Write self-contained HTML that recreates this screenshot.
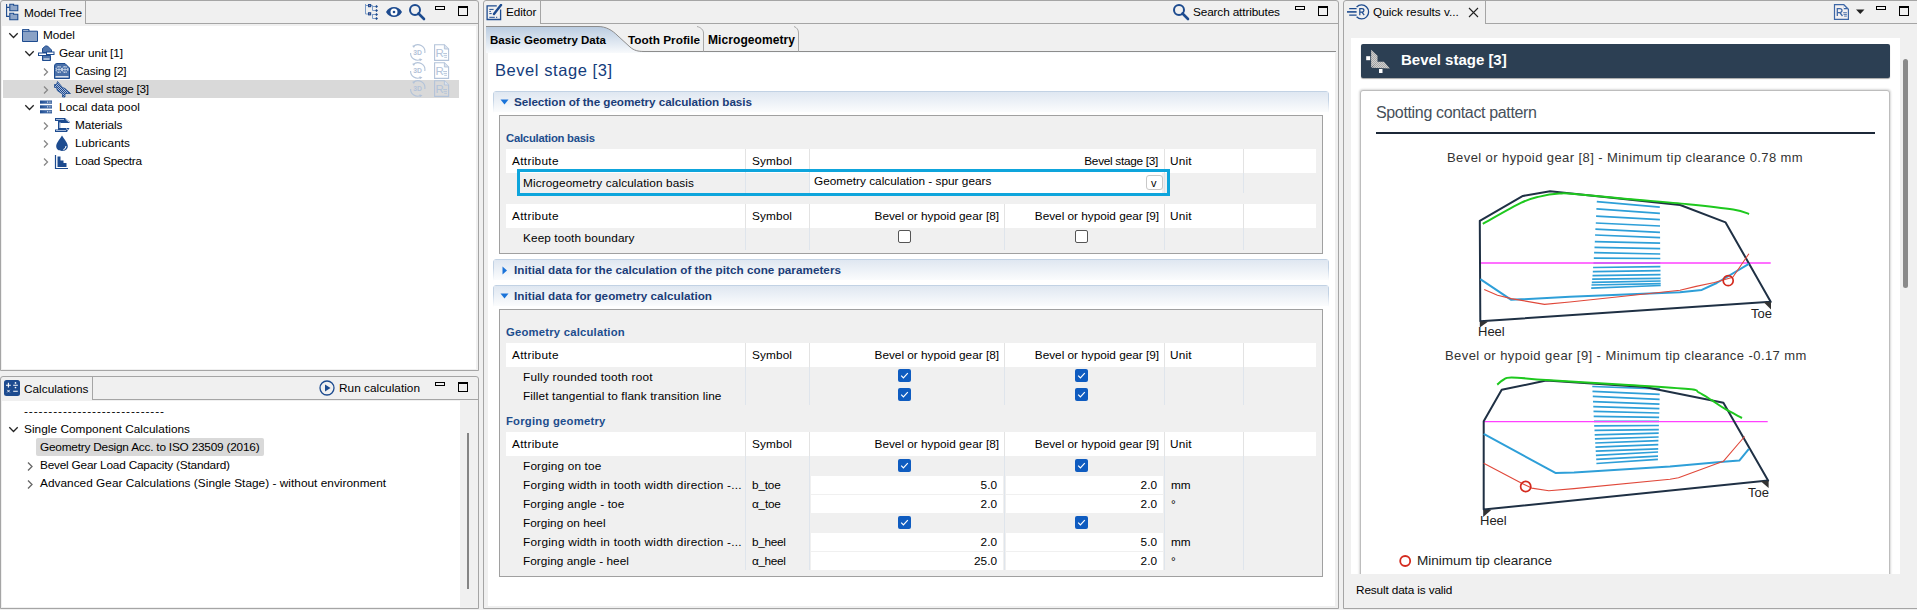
<!DOCTYPE html>
<html><head><meta charset="utf-8"><style>
*{box-sizing:border-box;margin:0;padding:0}
body{width:1917px;height:610px;overflow:hidden;background:#f0f0f0;font-family:"Liberation Sans",sans-serif;font-size:11.8px;color:#000;position:relative}
.a{position:absolute}
.t{position:absolute;white-space:nowrap;line-height:16px}
.pb{position:absolute;border:1px solid #a5a5a5;border-radius:3px 3px 0 0}
.hl{position:absolute;height:1px;background:#a5a5a5}
.vl{position:absolute;width:1px;background:#a5a5a5}
.white{position:absolute;background:#fff}
</style></head><body>

<!-- ============ MODEL TREE PANEL ============ -->
<div class="pb" style="left:0;top:0;width:479px;height:371px"></div>
<div class="hl" style="left:85px;top:23px;width:393px"></div>
<div class="vl" style="left:85px;top:1px;height:23px"></div>
<div class="white" style="left:2px;top:26px;width:474px;height:343px"></div>


<!-- Model tree header -->
<svg class="a" style="left:4px;top:3px" width="18" height="18" viewBox="0 0 18 18"><path d="M2.6 1V13.4H5.5M2.6 4.4H5.5" stroke="#1d4b8f" stroke-width="1.1" fill="none"></path><path d="M5.8 1.3H9.6V2.3H13.8V7.7H5.8Z" fill="#8fa6c8" stroke="#1d4b8f" stroke-width="1.1"></path><path d="M5.8 10.3H9.6V11.3H13.8V16.7H5.8Z" fill="#8fa6c8" stroke="#1d4b8f" stroke-width="1.1"></path></svg>
<div class="t" style="left: 24px; top: 5px; letter-spacing: -0.113px;">Model Tree</div>
<svg class="a" style="left:364px;top:3px" width="16" height="18" viewBox="0 0 16 18">
 <path d="M1.5 1V11M1.5 2.5H4.5M1.5 11H4.5M7 2.5H8.5V7.5H11M8.5 3.5H11M8.5 11H8.5V15.5H11M8.5 11.5H11" stroke="#7d9cc6" stroke-width="1" fill="none"></path>
 <rect x="4" y="1" width="3.2" height="3.2" fill="#1d4b8f"></rect><rect x="4" y="9.2" width="3.2" height="3.2" fill="#1d4b8f"></rect>
 <rect x="5.2" y="2.2" width="0.9" height="0.9" fill="#f0a0b0"></rect><rect x="5.2" y="10.4" width="0.9" height="0.9" fill="#f0a0b0"></rect>
 <path d="M12.5 2L14 3.5L12.5 5L11 3.5Z M12.5 6L14 7.5L12.5 9L11 7.5Z M12.5 10L14 11.5L12.5 13L11 11.5Z M12.5 14L14 15.5L12.5 17L11 15.5Z" fill="#1d4b8f"></path>
</svg>
<svg class="a" style="left:386px;top:6px" width="16" height="12" viewBox="0 0 16 12">
 <path d="M0 6C3.5 -0.8 12.5 -0.8 16 6C12.5 12.8 3.5 12.8 0 6Z" fill="#1d4b8f"></path>
 <circle cx="8" cy="6" r="3.5" fill="#fff"></circle><circle cx="8" cy="6" r="1.3" fill="#1d4b8f"></circle>
</svg>
<svg class="a" style="left:408px;top:3px" width="18" height="18" viewBox="0 0 18 18">
 <circle cx="7" cy="7" r="5" stroke="#1d4b8f" stroke-width="2" fill="none"></circle>
 <path d="M10.5 10.5L16 16" stroke="#1d4b8f" stroke-width="2.6" stroke-linecap="round"></path>
</svg>
<div class="a" style="left:435px;top:6px;width:10px;height:4px;border:1px solid #000"></div>
<div class="a" style="left:458px;top:6px;width:10px;height:10px;border:1px solid #000;border-top-width:2px"></div>

<!-- Model tree rows -->
<div class="a" style="left:3px;top:80px;width:456px;height:18px;background:#d9d9d9"></div>
<svg class="a" style="left:8px;top:31px" width="11" height="9" viewBox="0 0 11 9"><path d="M1.3 2.3L5.5 6.5L9.7 2.3" stroke="#222" stroke-width="1.3" fill="none"></path></svg>
<svg class="a" style="left:24px;top:49px" width="11" height="9" viewBox="0 0 11 9"><path d="M1.3 2.3L5.5 6.5L9.7 2.3" stroke="#222" stroke-width="1.3" fill="none"></path></svg>
<svg class="a" style="left:24px;top:103px" width="11" height="9" viewBox="0 0 11 9"><path d="M1.3 2.3L5.5 6.5L9.7 2.3" stroke="#222" stroke-width="1.3" fill="none"></path></svg>
<svg class="a" style="left:42px;top:67px" width="8" height="10" viewBox="0 0 8 10"><path d="M2 1.5L5.5 5L2 8.5" stroke="#888" stroke-width="1.3" fill="none"></path></svg>
<svg class="a" style="left:42px;top:85px" width="8" height="10" viewBox="0 0 8 10"><path d="M2 1.5L5.5 5L2 8.5" stroke="#888" stroke-width="1.3" fill="none"></path></svg>
<svg class="a" style="left:42px;top:121px" width="8" height="10" viewBox="0 0 8 10"><path d="M2 1.5L5.5 5L2 8.5" stroke="#888" stroke-width="1.3" fill="none"></path></svg>
<svg class="a" style="left:42px;top:139px" width="8" height="10" viewBox="0 0 8 10"><path d="M2 1.5L5.5 5L2 8.5" stroke="#888" stroke-width="1.3" fill="none"></path></svg>
<svg class="a" style="left:42px;top:157px" width="8" height="10" viewBox="0 0 8 10"><path d="M2 1.5L5.5 5L2 8.5" stroke="#888" stroke-width="1.3" fill="none"></path></svg>

<svg class="a" style="left:22px;top:29px" width="17" height="14" viewBox="0 0 17 14"><path d="M0.5 0.5H7V2.2H15.5V12.5H0.5Z" fill="#8aa2c6" stroke="#1d4b8f" stroke-width="1"></path><path d="M0.5 2.2H7" stroke="#1d4b8f"></path><path d="M1.2 1.3H6.3" stroke="#b8c7dc" stroke-width="0.8"></path></svg>
<svg class="a" style="left:38px;top:45px" width="17" height="17" viewBox="0 0 17 17"><path d="M4.5 7.5V3.5L7.5 1H9.5L13.5 5V7.5Z" fill="#4f74aa" stroke="#1d4b8f"></path><path d="M4.5 10.5H12.5V15.5H4.5Z" fill="#4f74aa" stroke="#1d4b8f"></path><path d="M5.5 14H11.5" stroke="#fff"></path><rect x="0.5" y="8" width="8" height="2.5" fill="#fff" stroke="#1d4b8f"></rect><rect x="8.5" y="7" width="7.5" height="2.5" fill="#fff" stroke="#1d4b8f"></rect></svg>
<svg class="a" style="left:54px;top:63px" width="17" height="17" viewBox="0 0 17 17"><path d="M0.5 3Q0.5 0.5 3 0.5H11L15.5 5V15.5H0.5Z" fill="#4a70a8" stroke="#1d4b8f"></path><circle cx="5" cy="6.5" r="3" fill="none" stroke="#fff" stroke-width="0.9" stroke-dasharray="1.4 1"></circle><circle cx="11" cy="6.5" r="3" fill="none" stroke="#fff" stroke-width="0.9" stroke-dasharray="1.4 1"></circle><path d="M5 3.5V9.5M2 6.5H14M11 3.5V9.5" stroke="#e8eef6" stroke-width="0.6"></path><path d="M1.5 13.8H14.5" stroke="#fff" stroke-width="1.2"></path></svg>
<svg class="a" style="left:54px;top:81px" width="17" height="17" viewBox="0 0 17 17"><defs><pattern id="chk" width="2" height="2" patternUnits="userSpaceOnUse"><rect width="2" height="2" fill="#1d4b8f"></rect><rect width="1" height="1" fill="#a9badb"></rect><rect x="1" y="1" width="1" height="1" fill="#a9badb"></rect></pattern></defs><path d="M3.5 0.5L8.5 6.5L11 7.5L16.5 12.5H11V16H8.5V13L3.4 9.7L2.5 6.5H0.5V3.5H2.5Z" fill="url(#chk)"></path><path d="M3.5 0.5L8.5 6.5L11 7.5L16.5 12.5H11V16H8.5V13L3.4 9.7L2.5 6.5H0.5V3.5H2.5Z" fill="none" stroke="#1d4b8f" stroke-width="0.8"></path></svg>
<svg class="a" style="left:39px;top:99px" width="15" height="16" viewBox="0 0 15 16"><defs><linearGradient id="dp" x1="0" x2="1"><stop offset="0" stop-color="#1d4b8f"></stop><stop offset="0.5" stop-color="#3d68a8"></stop><stop offset="1" stop-color="#1d4b8f"></stop></linearGradient></defs><rect x="1" y="1.5" width="12" height="3.2" fill="url(#dp)"></rect><rect x="1" y="6.3" width="12" height="3.2" fill="url(#dp)"></rect><rect x="1" y="11.2" width="12" height="3.2" fill="url(#dp)"></rect><path d="M8 3.1h1M9.7 3.1h1M11.4 3.1h1M8 7.9h1M9.7 7.9h1M11.4 7.9h1M8 12.8h1M9.7 12.8h1M11.4 12.8h1" stroke="#fff" stroke-width="1"></path></svg>
<svg class="a" style="left:54px;top:117px" width="17" height="17" viewBox="0 0 17 17"><path d="M1 1H11L15.5 4.5V6H5.5V11H15.5L13 15H1V12.5H4V4H1Z" fill="#1d4b8f"></path><path d="M2 2.5H10M6 5V11M2 13.5H12" stroke="#9fb5d6" stroke-width="1"></path><path d="M11.5 2L15 5M12 11.5L15 14" stroke="#fff" stroke-width="0.8"></path></svg>
<svg class="a" style="left:55px;top:135px" width="14" height="17" viewBox="0 0 14 17"><path d="M7 0.5C9.5 4.5 12.8 8 12.8 11.3C12.8 14.3 10.3 16 7 16C3.7 16 1.2 14.3 1.2 11.3C1.2 8 4.5 4.5 7 0.5Z" fill="#1d4b8f"></path><path d="M11 11C11 13 10 14 8.5 14.8" stroke="#fff" stroke-width="1.1" fill="none"></path></svg>
<svg class="a" style="left:54px;top:154px" width="16" height="16" viewBox="0 0 16 16"><path d="M1.5 1V14.5H14" stroke="#1d4b8f" stroke-width="1.2" fill="none"></path><path d="M3.5 2.5H6.5V6.5H9.5V9H12.5V13H3.5Z" fill="#1d4b8f"></path></svg>

<div class="t" style="left: 43px; top: 27px; letter-spacing: -0.035px;">Model</div>
<div class="t" style="left: 59px; top: 45px; letter-spacing: -0.077px;">Gear unit [1]</div>
<div class="t" style="left: 75px; top: 63px; letter-spacing: -0.169px;">Casing [2]</div>
<div class="t" style="left: 75px; top: 81px; letter-spacing: -0.289px;">Bevel stage [3]</div>
<div class="t" style="left: 59px; top: 99px; letter-spacing: 0.069px;">Local data pool</div>
<div class="t" style="left: 75px; top: 117px; letter-spacing: -0.045px;">Materials</div>
<div class="t" style="left: 75px; top: 135px; letter-spacing: 0.063px;">Lubricants</div>
<div class="t" style="left: 75px; top: 153px; letter-spacing: -0.29px;">Load Spectra</div>
<svg class="a" style="left:409px;top:44px" width="18" height="18" viewBox="0 0 18 18"><g stroke="#b3c3d9" fill="none" stroke-width="1.1"><path d="M4 2.8A7 7 0 0 1 15.8 9"></path><path d="M1.6 9A7 7 0 0 0 11.5 15.6"></path></g><path d="M3.2 1.8L6 1.2L5 4Z M10.5 14.3L13.5 15.6L10.8 17.2Z" fill="#b3c3d9"></path><text x="4.3" y="11.3" font-family="Liberation Sans" font-weight="bold" font-size="6.8" fill="#b3c3d9">3D</text></svg>
<svg class="a" style="left:434px;top:44px" width="16" height="18" viewBox="0 0 16 18"><path d="M0.6 0.8H10.4L14.6 5V16.4H0.6Z" fill="none" stroke="#b3c3d9" stroke-width="1.1"></path><path d="M10.4 0.8V5H14.6" fill="#dbe3ee" stroke="#b3c3d9" stroke-width="0.9"></path><text x="1.6" y="13.2" font-family="Liberation Sans" font-size="11.5" fill="#b3c3d9">R</text><path d="M9.2 9.5H13M9.6 11.4H13M10.2 13.3H13" stroke="#b3c3d9" stroke-width="0.9"></path></svg>
<svg class="a" style="left:409px;top:62px" width="18" height="18" viewBox="0 0 18 18"><g stroke="#b3c3d9" fill="none" stroke-width="1.1"><path d="M4 2.8A7 7 0 0 1 15.8 9"></path><path d="M1.6 9A7 7 0 0 0 11.5 15.6"></path></g><path d="M3.2 1.8L6 1.2L5 4Z M10.5 14.3L13.5 15.6L10.8 17.2Z" fill="#b3c3d9"></path><text x="4.3" y="11.3" font-family="Liberation Sans" font-weight="bold" font-size="6.8" fill="#b3c3d9">3D</text></svg>
<svg class="a" style="left:434px;top:62px" width="16" height="18" viewBox="0 0 16 18"><path d="M0.6 0.8H10.4L14.6 5V16.4H0.6Z" fill="none" stroke="#b3c3d9" stroke-width="1.1"></path><path d="M10.4 0.8V5H14.6" fill="#dbe3ee" stroke="#b3c3d9" stroke-width="0.9"></path><text x="1.6" y="13.2" font-family="Liberation Sans" font-size="11.5" fill="#b3c3d9">R</text><path d="M9.2 9.5H13M9.6 11.4H13M10.2 13.3H13" stroke="#b3c3d9" stroke-width="0.9"></path></svg>
<svg class="a" style="left:409px;top:80px" width="18" height="18" viewBox="0 0 18 18"><g stroke="#b3c3d9" fill="none" stroke-width="1.1"><path d="M4 2.8A7 7 0 0 1 15.8 9"></path><path d="M1.6 9A7 7 0 0 0 11.5 15.6"></path></g><path d="M3.2 1.8L6 1.2L5 4Z M10.5 14.3L13.5 15.6L10.8 17.2Z" fill="#b3c3d9"></path><text x="4.3" y="11.3" font-family="Liberation Sans" font-weight="bold" font-size="6.8" fill="#b3c3d9">3D</text></svg>
<svg class="a" style="left:434px;top:80px" width="16" height="18" viewBox="0 0 16 18"><path d="M0.6 0.8H10.4L14.6 5V16.4H0.6Z" fill="none" stroke="#b3c3d9" stroke-width="1.1"></path><path d="M10.4 0.8V5H14.6" fill="#dbe3ee" stroke="#b3c3d9" stroke-width="0.9"></path><text x="1.6" y="13.2" font-family="Liberation Sans" font-size="11.5" fill="#b3c3d9">R</text><path d="M9.2 9.5H13M9.6 11.4H13M10.2 13.3H13" stroke="#b3c3d9" stroke-width="0.9"></path></svg>

<!-- ============ CALCULATIONS PANEL ============ -->
<div class="pb" style="left:0;top:376px;width:479px;height:233px"></div>
<div class="hl" style="left:92px;top:399px;width:386px"></div>
<div class="vl" style="left:92px;top:377px;height:23px"></div>
<div class="white" style="left:2px;top:401px;width:458px;height:206px"></div>


<!-- Calculations header -->
<svg class="a" style="left:4px;top:380px" width="16" height="16" viewBox="0 0 16 16"><rect x="0" y="0" width="16" height="16" rx="2.5" fill="#1d4b8f"></rect><path d="M2 5.2H6.8M4.4 2.8V7.6M9.2 5.2H13.8M9.2 11.2H13.8" stroke="#fff" stroke-width="1.1"></path><path d="M3.3 9.9L5.7 12.3M5.7 9.9L3.3 12.3" stroke="#fff" stroke-width="0.9"></path><circle cx="11.5" cy="2.9" r="0.85" fill="#fff"></circle><circle cx="11.5" cy="7.5" r="0.85" fill="#fff"></circle></svg>
<div class="t" style="left: 24px; top: 381px; letter-spacing: 0.012px;">Calculations</div>
<svg class="a" style="left:319px;top:380px" width="16" height="16" viewBox="0 0 16 16"><circle cx="8" cy="8" r="7" fill="none" stroke="#1d4b8f" stroke-width="1.3"></circle><path d="M6 4.5L11.5 8L6 11.5Z" fill="#1d4b8f"></path></svg>
<div class="t" style="left: 339px; top: 380px; letter-spacing: 0.023px;">Run calculation</div>
<div class="a" style="left:435px;top:382px;width:10px;height:4px;border:1px solid #000"></div>
<div class="a" style="left:458px;top:382px;width:10px;height:10px;border:1px solid #000;border-top-width:2px"></div>
<div class="a" style="left:467px;top:433px;width:2px;height:156px;background:#858585"></div>

<div class="a" style="left:36px;top:438px;width:228px;height:18px;background:#d9d9d9;border-radius:2px"></div>
<svg class="a" style="left:8px;top:425px" width="11" height="9" viewBox="0 0 11 9"><path d="M1.3 2.3L5.5 6.5L9.7 2.3" stroke="#222" stroke-width="1.3" fill="none"></path></svg>
<svg class="a" style="left:26px;top:461px" width="8" height="11" viewBox="0 0 8 11"><path d="M2 1.5L6 5.5L2 9.5" stroke="#666" stroke-width="1.3" fill="none"></path></svg>
<svg class="a" style="left:26px;top:479px" width="8" height="11" viewBox="0 0 8 11"><path d="M2 1.5L6 5.5L2 9.5" stroke="#666" stroke-width="1.3" fill="none"></path></svg>
<div class="t" style="left: 24px; top: 403px; letter-spacing: 0.931px;">-----------------------------</div>
<div class="t" style="left: 24px; top: 421px; letter-spacing: 0.05px;">Single Component Calculations</div>
<div class="t" style="left: 40px; top: 439px; letter-spacing: -0.204px;">Geometry Design Acc. to ISO 23509 (2016)</div>
<div class="t" style="left: 40px; top: 457px; letter-spacing: -0.198px;">Bevel Gear Load Capacity (Standard)</div>
<div class="t" style="left: 40px; top: 475px; letter-spacing: 0.039px;">Advanced Gear Calculations (Single Stage) - without environment</div>

<!-- ============ EDITOR PANEL ============ -->
<div class="pb" style="left:483px;top:0;width:856px;height:609px"></div>
<div class="hl" style="left:540px;top:23px;width:798px"></div>
<div class="vl" style="left:540px;top:1px;height:23px"></div>

<div class="white" style="left:488px;top:53px;width:847px;height:553px"></div>

<!-- EDITOR CONTENT -->
<svg class="a" style="left:486px;top:4px" width="17" height="17" viewBox="0 0 17 17"><path d="M10.8 1.9H1.1V15.5H14.6V5.6" stroke="#1d4b8f" stroke-width="1.3" fill="none"></path><path d="M3.3 5.4H7.6M3.3 7.4H4.9M3.3 9.6H5.7M3.3 13.3H8.8M10 13.3H11.2" stroke="#1d4b8f" stroke-width="1"></path><path d="M15 1L8 10" stroke="#1d4b8f" stroke-width="2.4" stroke-linecap="round"></path></svg>
<div class="t" style="left: 506px; top: 4px; letter-spacing: -0.066px;">Editor</div>
<svg class="a" style="left:1172px;top:3px" width="18" height="18" viewBox="0 0 18 18"><circle cx="7" cy="7" r="5" stroke="#1d4b8f" stroke-width="2" fill="none"></circle><path d="M10.5 10.5L16 16" stroke="#1d4b8f" stroke-width="2.6" stroke-linecap="round"></path></svg>
<div class="t" style="left: 1193px; top: 4px; letter-spacing: -0.137px;">Search attributes</div>
<div class="a" style="left:1295px;top:6px;width:10px;height:4px;border:1px solid #000"></div>
<div class="a" style="left:1318px;top:6px;width:10px;height:10px;border:1px solid #000;border-top-width:2px"></div>
<svg class="a" style="left:486px;top:26px" width="850" height="27" viewBox="0 0 850 27">
<defs><linearGradient id="tg" x1="0" y1="0" x2="0" y2="1"><stop offset="0" stop-color="#b9cbe0"></stop><stop offset="1" stop-color="#f8fafc"></stop></linearGradient></defs>
<path d="M0 0.5H112C120 0.5 126 4 132 10L144 21C148 24.5 152 25.5 158 25.5H850V27H0Z" fill="url(#tg)"></path>
<path d="M0 0.5H112C120 0.5 126 4 132 10L144 21C148 24.5 152 25.5 158 25.5H850" fill="none" stroke="#8c8c8c" stroke-width="1"></path>
<path d="M211 0.5C215 1.5 217.5 4 217.5 7V25.5M308 0.5C311 1.5 312.5 4 312.5 7V25.5" fill="none" stroke="#a8a8a8" stroke-width="1"></path>
</svg>
<div class="t" style="left: 490px; top: 32px; font-weight: bold; font-size: 11.5px; letter-spacing: 0.016px;">Basic Geometry Data</div>
<div class="t" style="left: 628px; top: 32px; font-weight: bold; font-size: 11.8px; letter-spacing: 0.01px;">Tooth Profile</div>
<div class="t" style="left: 708px; top: 32px; font-weight: bold; font-size: 12px; letter-spacing: 0.081px;">Microgeometry</div>
<div class="t" style="left: 495px; top: 60px; font-size: 16.5px; line-height: 20px; color: rgb(20, 60, 124); letter-spacing: 0.56px;">Bevel stage [3]</div>
<div class="a" style="left:493px;top:91px;width:836px;height:22px;border:1px solid #c2d2e4;border-bottom:none;border-radius:3px 3px 0 0;background:linear-gradient(#dde6f0,#fff);-webkit-mask-image:linear-gradient(#000 40%,transparent)"></div>
<div class="a" style="left:494px;top:92px;width:834px;height:20px;background:linear-gradient(#dfe7f1,#fbfcfd)"></div>
<svg class="a" style="left:500px;top:99px" width="9" height="6" viewBox="0 0 9 6"><path d="M0.5 0.5H8.5L4.5 5.5Z" fill="#1a73d9"></path></svg>
<div class="t" style="left: 514px; top: 94px; font-weight: bold; font-size: 11.7px; color: rgb(27, 61, 120); letter-spacing: -0.055px;">Selection of the geometry calculation basis</div>
<div class="a" style="left:499px;top:115px;width:824px;height:139px;border:1px solid #a0a0a0;background:#f0f0f0"></div>
<div class="t" style="left: 506px; top: 130px; font-weight: bold; font-size: 11.3px; color: rgb(29, 77, 141); letter-spacing: -0.245px;">Calculation basis</div>
<div class="a" style="left:506px;top:149px;width:810px;height:24px;background:#fff"></div>
<div class="a" style="left:745px;top:149px;width:1px;height:24px;background:#e3e3e3"></div>
<div class="a" style="left:809px;top:149px;width:1px;height:24px;background:#e3e3e3"></div>
<div class="a" style="left:1164px;top:149px;width:1px;height:24px;background:#e3e3e3"></div>
<div class="a" style="left:1243px;top:149px;width:1px;height:24px;background:#e3e3e3"></div>
<div class="t" style="left: 512px; top: 153px; letter-spacing: 0.32px;">Attribute</div>
<div class="t" style="left: 752px; top: 153px; letter-spacing: 0.131px;">Symbol</div>
<div class="t" style="left: 858px; width: 300px; text-align: right; top: 153px; letter-spacing: -0.289px;">Bevel stage [3]</div>
<div class="t" style="left: 1170px; top: 153px; letter-spacing: 0.205px;">Unit</div>
<div class="a" style="left:745px;top:173px;width:1px;height:20px;background:#dfe5ec"></div>
<div class="a" style="left:809px;top:173px;width:1px;height:20px;background:#dfe5ec"></div>
<div class="a" style="left:1164px;top:173px;width:1px;height:20px;background:#dfe5ec"></div>
<div class="a" style="left:1243px;top:173px;width:1px;height:20px;background:#dfe5ec"></div>
<div class="t" style="left: 523px; top: 175px; letter-spacing: 0.105px;">Microgeometry calculation basis</div>
<div class="a" style="left:810px;top:172px;width:352px;height:21px;background:#fff"></div>
<div class="t" style="left: 814px; top: 173px; letter-spacing: 0.012px;">Geometry calculation - spur gears</div>
<div class="a" style="left:1146px;top:175px;width:17px;height:15px;border:1px solid #c8c8c8;border-radius:3px;background:#fff"></div>
<div class="t" style="left:1151px;top:175px;font-size:11px">v</div>
<div class="a" style="left:517px;top:169px;width:653px;height:27px;border:3px solid #0ea5dc"></div>
<div class="a" style="left:506px;top:204px;width:810px;height:24px;background:#fff"></div>
<div class="a" style="left:745px;top:204px;width:1px;height:24px;background:#e3e3e3"></div>
<div class="a" style="left:809px;top:204px;width:1px;height:24px;background:#e3e3e3"></div>
<div class="a" style="left:1004px;top:204px;width:1px;height:24px;background:#e3e3e3"></div>
<div class="a" style="left:1164px;top:204px;width:1px;height:24px;background:#e3e3e3"></div>
<div class="a" style="left:1243px;top:204px;width:1px;height:24px;background:#e3e3e3"></div>
<div class="t" style="left: 512px; top: 208px; letter-spacing: 0.32px;">Attribute</div>
<div class="t" style="left: 752px; top: 208px; letter-spacing: 0.131px;">Symbol</div>
<div class="t" style="left: 699px; width: 300px; text-align: right; top: 208px; letter-spacing: -0.005px;">Bevel or hypoid gear [8]</div>
<div class="t" style="left: 859px; width: 300px; text-align: right; top: 208px; letter-spacing: -0.018px;">Bevel or hypoid gear [9]</div>
<div class="t" style="left: 1170px; top: 208px; letter-spacing: 0.205px;">Unit</div>
<div class="a" style="left:745px;top:228px;width:1px;height:22px;background:#dfe5ec"></div>
<div class="a" style="left:809px;top:228px;width:1px;height:22px;background:#dfe5ec"></div>
<div class="a" style="left:1004px;top:228px;width:1px;height:22px;background:#dfe5ec"></div>
<div class="a" style="left:1164px;top:228px;width:1px;height:22px;background:#dfe5ec"></div>
<div class="a" style="left:1243px;top:228px;width:1px;height:22px;background:#dfe5ec"></div>
<div class="t" style="left: 523px; top: 230px; letter-spacing: 0.109px;">Keep tooth boundary</div>
<div class="a" style="left:898px;top:230px;width:13px;height:13px;border:1px solid #555;border-radius:2px;background:#fff"></div>
<div class="a" style="left:1075px;top:230px;width:13px;height:13px;border:1px solid #555;border-radius:2px;background:#fff"></div>
<div class="a" style="left:493px;top:259px;width:836px;height:22px;border:1px solid #c2d2e4;border-bottom:none;border-radius:3px 3px 0 0;background:linear-gradient(#dde6f0,#fff);-webkit-mask-image:linear-gradient(#000 40%,transparent)"></div>
<div class="a" style="left:494px;top:260px;width:834px;height:20px;background:linear-gradient(#dfe7f1,#fbfcfd)"></div>
<svg class="a" style="left:502px;top:266px" width="6" height="9" viewBox="0 0 6 9"><path d="M0.5 0.5V8.5L5 4.5Z" fill="#1a73d9"></path></svg>
<div class="t" style="left: 514px; top: 262px; font-weight: bold; font-size: 11.7px; color: rgb(27, 61, 120); letter-spacing: 0.038px;">Initial data for the calculation of the pitch cone parameters</div>
<div class="a" style="left:493px;top:285px;width:836px;height:22px;border:1px solid #c2d2e4;border-bottom:none;border-radius:3px 3px 0 0;background:linear-gradient(#dde6f0,#fff);-webkit-mask-image:linear-gradient(#000 40%,transparent)"></div>
<div class="a" style="left:494px;top:286px;width:834px;height:20px;background:linear-gradient(#dfe7f1,#fbfcfd)"></div>
<svg class="a" style="left:500px;top:293px" width="9" height="6" viewBox="0 0 9 6"><path d="M0.5 0.5H8.5L4.5 5.5Z" fill="#1a73d9"></path></svg>
<div class="t" style="left: 514px; top: 288px; font-weight: bold; font-size: 11.7px; color: rgb(27, 61, 120); letter-spacing: 0.033px;">Initial data for geometry calculation</div>
<div class="a" style="left:499px;top:309px;width:824px;height:268px;border:1px solid #a0a0a0;background:#f0f0f0"></div>
<div class="t" style="left: 506px; top: 324px; font-weight: bold; font-size: 11.3px; color: rgb(29, 77, 141); letter-spacing: 0.2px;">Geometry calculation</div>
<div class="a" style="left:506px;top:343px;width:810px;height:24px;background:#fff"></div>
<div class="a" style="left:745px;top:343px;width:1px;height:24px;background:#e3e3e3"></div>
<div class="a" style="left:809px;top:343px;width:1px;height:24px;background:#e3e3e3"></div>
<div class="a" style="left:1004px;top:343px;width:1px;height:24px;background:#e3e3e3"></div>
<div class="a" style="left:1164px;top:343px;width:1px;height:24px;background:#e3e3e3"></div>
<div class="a" style="left:1243px;top:343px;width:1px;height:24px;background:#e3e3e3"></div>
<div class="t" style="left: 512px; top: 347px; letter-spacing: 0.32px;">Attribute</div>
<div class="t" style="left: 752px; top: 347px; letter-spacing: 0.131px;">Symbol</div>
<div class="t" style="left: 699px; width: 300px; text-align: right; top: 347px; letter-spacing: -0.005px;">Bevel or hypoid gear [8]</div>
<div class="t" style="left: 859px; width: 300px; text-align: right; top: 347px; letter-spacing: -0.018px;">Bevel or hypoid gear [9]</div>
<div class="t" style="left: 1170px; top: 347px; letter-spacing: 0.205px;">Unit</div>
<div class="a" style="left:745px;top:367px;width:1px;height:38px;background:#dfe5ec"></div>
<div class="a" style="left:809px;top:367px;width:1px;height:38px;background:#dfe5ec"></div>
<div class="a" style="left:1004px;top:367px;width:1px;height:38px;background:#dfe5ec"></div>
<div class="a" style="left:1164px;top:367px;width:1px;height:38px;background:#dfe5ec"></div>
<div class="a" style="left:1243px;top:367px;width:1px;height:38px;background:#dfe5ec"></div>
<div class="t" style="left: 523px; top: 369px; letter-spacing: 0.217px;">Fully rounded tooth root</div>
<div class="t" style="left: 523px; top: 388px; letter-spacing: 0.121px;">Fillet tangential to flank transition line</div>
<svg class="a" style="left:898px;top:369px" width="13" height="13" viewBox="0 0 13 13"><rect width="13" height="13" rx="2" fill="#0f5cc0"></rect><path d="M3.2 6.6L5.4 8.8L9.8 4.2" stroke="#fff" stroke-width="1.2" fill="none"></path></svg>
<svg class="a" style="left:1075px;top:369px" width="13" height="13" viewBox="0 0 13 13"><rect width="13" height="13" rx="2" fill="#0f5cc0"></rect><path d="M3.2 6.6L5.4 8.8L9.8 4.2" stroke="#fff" stroke-width="1.2" fill="none"></path></svg>
<svg class="a" style="left:898px;top:388px" width="13" height="13" viewBox="0 0 13 13"><rect width="13" height="13" rx="2" fill="#0f5cc0"></rect><path d="M3.2 6.6L5.4 8.8L9.8 4.2" stroke="#fff" stroke-width="1.2" fill="none"></path></svg>
<svg class="a" style="left:1075px;top:388px" width="13" height="13" viewBox="0 0 13 13"><rect width="13" height="13" rx="2" fill="#0f5cc0"></rect><path d="M3.2 6.6L5.4 8.8L9.8 4.2" stroke="#fff" stroke-width="1.2" fill="none"></path></svg>
<div class="t" style="left: 506px; top: 413px; font-weight: bold; font-size: 11.3px; color: rgb(29, 77, 141); letter-spacing: 0.218px;">Forging geometry</div>
<div class="a" style="left:506px;top:432px;width:810px;height:24px;background:#fff"></div>
<div class="a" style="left:745px;top:432px;width:1px;height:24px;background:#e3e3e3"></div>
<div class="a" style="left:809px;top:432px;width:1px;height:24px;background:#e3e3e3"></div>
<div class="a" style="left:1004px;top:432px;width:1px;height:24px;background:#e3e3e3"></div>
<div class="a" style="left:1164px;top:432px;width:1px;height:24px;background:#e3e3e3"></div>
<div class="a" style="left:1243px;top:432px;width:1px;height:24px;background:#e3e3e3"></div>
<div class="t" style="left: 512px; top: 436px; letter-spacing: 0.32px;">Attribute</div>
<div class="t" style="left: 752px; top: 436px; letter-spacing: 0.131px;">Symbol</div>
<div class="t" style="left: 699px; width: 300px; text-align: right; top: 436px; letter-spacing: -0.005px;">Bevel or hypoid gear [8]</div>
<div class="t" style="left: 859px; width: 300px; text-align: right; top: 436px; letter-spacing: -0.018px;">Bevel or hypoid gear [9]</div>
<div class="t" style="left: 1170px; top: 436px; letter-spacing: 0.205px;">Unit</div>
<div class="a" style="left:745px;top:456px;width:1px;height:114px;background:#dfe5ec"></div>
<div class="a" style="left:809px;top:456px;width:1px;height:114px;background:#dfe5ec"></div>
<div class="a" style="left:1004px;top:456px;width:1px;height:114px;background:#dfe5ec"></div>
<div class="a" style="left:1164px;top:456px;width:1px;height:114px;background:#dfe5ec"></div>
<div class="a" style="left:1243px;top:456px;width:1px;height:114px;background:#dfe5ec"></div>
<svg class="a" style="left:898px;top:459px" width="13" height="13" viewBox="0 0 13 13"><rect width="13" height="13" rx="2" fill="#0f5cc0"></rect><path d="M3.2 6.6L5.4 8.8L9.8 4.2" stroke="#fff" stroke-width="1.2" fill="none"></path></svg>
<svg class="a" style="left:1075px;top:459px" width="13" height="13" viewBox="0 0 13 13"><rect width="13" height="13" rx="2" fill="#0f5cc0"></rect><path d="M3.2 6.6L5.4 8.8L9.8 4.2" stroke="#fff" stroke-width="1.2" fill="none"></path></svg>
<div class="t" style="left: 523px; top: 458px; letter-spacing: 0.171px;">Forging on toe</div>
<div class="a" style="left:811px;top:476px;width:192px;height:18px;background:#fff"></div>
<div class="a" style="left:1006px;top:476px;width:157px;height:18px;background:#fff"></div>
<div class="t" style="left:697px;width:300px;text-align:right;top:477px;">5.0</div>
<div class="t" style="left:857px;width:300px;text-align:right;top:477px;">2.0</div>
<div class="t" style="left: 523px; top: 477px; letter-spacing: 0.24px;">Forging width in tooth width direction -...</div>
<div class="t" style="left: 752px; top: 477px; letter-spacing: -0.183px;">b_toe</div>
<div class="t" style="left:1171px;top:477px;">mm</div>
<div class="a" style="left:811px;top:495px;width:192px;height:18px;background:#fff"></div>
<div class="a" style="left:1006px;top:495px;width:157px;height:18px;background:#fff"></div>
<div class="t" style="left:697px;width:300px;text-align:right;top:496px;">2.0</div>
<div class="t" style="left:857px;width:300px;text-align:right;top:496px;">2.0</div>
<div class="t" style="left: 523px; top: 496px; letter-spacing: 0.126px;">Forging angle - toe</div>
<div class="t" style="left: 752px; top: 496px; letter-spacing: -0.245px;">α_toe</div>
<div class="t" style="left:1171px;top:496px;">°</div>
<svg class="a" style="left:898px;top:516px" width="13" height="13" viewBox="0 0 13 13"><rect width="13" height="13" rx="2" fill="#0f5cc0"></rect><path d="M3.2 6.6L5.4 8.8L9.8 4.2" stroke="#fff" stroke-width="1.2" fill="none"></path></svg>
<svg class="a" style="left:1075px;top:516px" width="13" height="13" viewBox="0 0 13 13"><rect width="13" height="13" rx="2" fill="#0f5cc0"></rect><path d="M3.2 6.6L5.4 8.8L9.8 4.2" stroke="#fff" stroke-width="1.2" fill="none"></path></svg>
<div class="t" style="left: 523px; top: 515px; letter-spacing: 0.044px;">Forging on heel</div>
<div class="a" style="left:811px;top:533px;width:192px;height:18px;background:#fff"></div>
<div class="a" style="left:1006px;top:533px;width:157px;height:18px;background:#fff"></div>
<div class="t" style="left:697px;width:300px;text-align:right;top:534px;">2.0</div>
<div class="t" style="left:857px;width:300px;text-align:right;top:534px;">5.0</div>
<div class="t" style="left: 523px; top: 534px; letter-spacing: 0.24px;">Forging width in tooth width direction -...</div>
<div class="t" style="left: 752px; top: 534px; letter-spacing: -0.328px;">b_heel</div>
<div class="t" style="left:1171px;top:534px;">mm</div>
<div class="a" style="left:811px;top:552px;width:192px;height:18px;background:#fff"></div>
<div class="a" style="left:1006px;top:552px;width:157px;height:18px;background:#fff"></div>
<div class="t" style="left:697px;width:300px;text-align:right;top:553px;">25.0</div>
<div class="t" style="left:857px;width:300px;text-align:right;top:553px;">2.0</div>
<div class="t" style="left: 523px; top: 553px; letter-spacing: 0.051px;">Forging angle - heel</div>
<div class="t" style="left: 752px; top: 553px; letter-spacing: -0.378px;">α_heel</div>
<div class="t" style="left:1171px;top:553px;">°</div>
<!-- END EDITOR CONTENT -->
<!-- ============ QUICK RESULTS PANEL ============ -->
<div class="pb" style="left:1343px;top:0;width:590px;height:609px"></div>
<div class="hl" style="left:1485px;top:23px;width:432px"></div>
<div class="vl" style="left:1485px;top:1px;height:23px"></div>
<div class="white" style="left:1351px;top:38px;width:549px;height:536px"></div>

<!-- QR CONTENT -->
<svg class="a" style="left:1346px;top:4px" width="24" height="17" viewBox="0 0 24 17"><path d="M10.6 3A7 7 0 1 1 10.6 12.8" stroke="#1d4b8f" stroke-width="1.3" fill="none"></path><path d="M3.2 4.6H10.6M3.2 11.2H10.6" stroke="#1d4b8f" stroke-width="1.2"></path><path d="M1 7.9H10.6" stroke="#1d4b8f" stroke-width="1.6"></path><path d="M13.8 11.2V4.7H15.9C17.3 4.7 17.9 5.4 17.9 6.5C17.9 7.6 17.2 8.2 15.9 8.2H13.8M15.9 8.2L18.2 11.2" stroke="#1d4b8f" stroke-width="1.2" fill="none"></path></svg>
<div class="t" style="left: 1373px; top: 4px; letter-spacing: -0.036px;">Quick results v...</div>
<svg class="a" style="left:1468px;top:7px" width="11" height="11" viewBox="0 0 11 11"><path d="M1 1L10 10M10 1L1 10" stroke="#222" stroke-width="1.1"></path></svg>
<svg class="a" style="left:1833px;top:4px" width="17" height="17" viewBox="0 0 17 17"><path d="M1.5 0.6H10.8L15.4 5.2V15.4H1.5Z" fill="#f4f1f1" stroke="#3d67a6" stroke-width="1.2"></path><path d="M10.8 0.6V5.2H15.4Z" fill="#3d67a6"></path><path d="M10.8 1.8V4.1H13.1Z" fill="#fff"></path><path d="M4.3 12V4.6H6.8C8.3 4.6 9 5.4 9 6.6C9 7.8 8.2 8.5 6.8 8.5H4.3M6.8 8.5L9.5 12" stroke="#3d67a6" stroke-width="1.25" fill="none"></path><path d="M10.2 8.7H13.9M10.5 10.4H13.9M11.1 12.1H13.9" stroke="#3d67a6" stroke-width="0.9"></path></svg>
<svg class="a" style="left:1856px;top:9px" width="9" height="6" viewBox="0 0 9 6"><path d="M0 0.5H8.5L4.25 5Z" fill="#222"></path></svg>
<div class="a" style="left:1876px;top:6px;width:10px;height:4px;border:1px solid #000"></div>
<div class="a" style="left:1899px;top:6px;width:10px;height:10px;border:1px solid #000;border-top-width:2px"></div>
<div class="a" style="left:1900px;top:38px;width:16px;height:536px;background:#f0f0f0"></div>
<div class="a" style="left:1903px;top:59px;width:5px;height:229px;background:#8a8a8a;border-radius:3px"></div>
<div class="a" style="left:1361px;top:44px;width:529px;height:34px;background:#2c3f53;border-radius:2px;box-shadow:0 1px 1px rgba(0,0,0,.35)"></div>
<svg class="a" style="left:1365px;top:48px" width="26" height="26" viewBox="0 0 26 26"><defs><pattern id="gchk" width="2" height="2" patternUnits="userSpaceOnUse"><rect width="2" height="2" fill="#a8a8a8"></rect><rect width="1" height="1" fill="#d0d0d0"></rect><rect x="1" y="1" width="1" height="1" fill="#d0d0d0"></rect></pattern></defs><path d="M6.1 1.8L12.5 7.7V14.6L6.1 19.5Z" fill="url(#gchk)"></path><path d="M6.6 19.7L12.5 13.8H18.9L24.8 20.5Z" fill="url(#gchk)"></path><rect x="1.2" y="8.2" width="4" height="4" fill="#fff"></rect><rect x="14" y="21" width="3.5" height="4" fill="#fff"></rect></svg>
<div class="t" style="left: 1401px; top: 51px; font-size: 15px; line-height: 18px; font-weight: bold; color: rgb(255, 255, 255); letter-spacing: -0.014px;">Bevel stage [3]</div>
<div class="a" style="left:1360px;top:90px;width:530px;height:500px;border:1px solid #bdbdbd;border-radius:3px;box-shadow:0 0 2px 1px rgba(0,0,0,.15);background:#fff"></div>
<div class="t" style="left: 1376px; top: 104px; font-size: 16px; line-height: 18px; color: rgb(70, 80, 90); letter-spacing: -0.348px;">Spotting contact pattern</div>
<div class="a" style="left:1376px;top:132px;width:499px;height:2px;background:#1c2838"></div>
<div class="t" style="left: 1447px; top: 149px; font-size: 13px; line-height: 18px; color: rgb(51, 51, 51); letter-spacing: 0.411px;">Bevel or hypoid gear [8] - Minimum tip clearance 0.78 mm</div>
<div class="t" style="left: 1445px; top: 347px; font-size: 13px; line-height: 18px; color: rgb(51, 51, 51); letter-spacing: 0.428px;">Bevel or hypoid gear [9] - Minimum tip clearance -0.17 mm</div>
<svg class="a" style="left:0;top:0" width="1917" height="610" viewBox="0 0 1917 610">
<line x1="1596.8" y1="201.7" x2="1659.8" y2="207.1" stroke="#2e9fd8" stroke-width="1.7"></line>
<line x1="1596.4" y1="208.9" x2="1659.9" y2="213.4" stroke="#2e9fd8" stroke-width="1.7"></line>
<line x1="1596.1" y1="216.1" x2="1659.9" y2="219.7" stroke="#2e9fd8" stroke-width="1.7"></line>
<line x1="1595.8" y1="223.0" x2="1660.0" y2="226.0" stroke="#2e9fd8" stroke-width="1.7"></line>
<line x1="1595.4" y1="229.1" x2="1660.0" y2="232.3" stroke="#2e9fd8" stroke-width="1.7"></line>
<line x1="1595.1" y1="235.0" x2="1660.1" y2="237.7" stroke="#2e9fd8" stroke-width="1.7"></line>
<line x1="1594.8" y1="241.7" x2="1660.1" y2="243.2" stroke="#2e9fd8" stroke-width="1.7"></line>
<line x1="1594.5" y1="247.3" x2="1660.2" y2="248.6" stroke="#2e9fd8" stroke-width="1.7"></line>
<line x1="1594.1" y1="252.7" x2="1660.2" y2="254.0" stroke="#2e9fd8" stroke-width="1.7"></line>
<line x1="1593.8" y1="258.1" x2="1660.3" y2="258.5" stroke="#2e9fd8" stroke-width="1.7"></line>
<line x1="1593.5" y1="263.0" x2="1660.3" y2="263.0" stroke="#2e9fd8" stroke-width="1.7"></line>
<line x1="1593.1" y1="267.5" x2="1660.4" y2="266.6" stroke="#2e9fd8" stroke-width="1.7"></line>
<line x1="1592.8" y1="271.6" x2="1660.5" y2="270.7" stroke="#2e9fd8" stroke-width="1.7"></line>
<line x1="1592.5" y1="275.6" x2="1660.5" y2="274.7" stroke="#2e9fd8" stroke-width="1.7"></line>
<line x1="1592.2" y1="279.2" x2="1660.6" y2="278.3" stroke="#2e9fd8" stroke-width="1.7"></line>
<line x1="1591.8" y1="282.3" x2="1660.6" y2="281.0" stroke="#2e9fd8" stroke-width="1.7"></line>
<line x1="1591.5" y1="285.0" x2="1660.7" y2="283.7" stroke="#2e9fd8" stroke-width="1.7"></line>
<line x1="1591.2" y1="288.2" x2="1660.7" y2="285.5" stroke="#2e9fd8" stroke-width="1.7"></line>
<line x1="1480.5" y1="263" x2="1770.7" y2="263" stroke="#ff40ff" stroke-width="1.3"></line>
<polygon points="1480.3,321.2 1479.8,220.8 1522.9,195.9 1550.1,191.3 1680.2,205.0 1725.6,222.4 1770.7,301.8" fill="none" stroke="#1f3044" stroke-width="2" stroke-linejoin="round"></polygon>
<path d="M1482.8 223.9 C1489.2 220.4 1512.0 207.2 1521.4 202.7 C1530.9 198.1 1533.2 198.1 1539.5 196.6 C1545.8 195.1 1553.4 194.0 1559.2 193.6 C1565.0 193.2 1563.0 193.0 1574.3 193.9 C1585.6 194.8 1608.4 197.2 1627.3 198.9 C1646.2 200.6 1670.1 202.4 1687.8 204.2 C1705.5 206.0 1723.0 207.9 1733.2 209.5 C1743.4 211.1 1746.4 213.2 1749.1 214.0" fill="none" stroke="#1ec81e" stroke-width="2"></path>
<polyline points="1480.3,279.1 1511.3,299.8 1569.8,296.8 1680.0,292.2 1701.8,289.9 1716.7,283.0 1748.9,263.9" fill="none" stroke="#2e9fd8" stroke-width="2" stroke-linejoin="round"></polyline>
<polyline points="1484.2,289.4 1497.5,295.2 1511.3,298.6 1544.5,304.4 1569.8,302.0 1680.0,290.3 1696.1,286.4 1714.4,282.5 1732.8,277.3 1748.9,253.8" fill="none" stroke="#e0483a" stroke-width="1.1" stroke-linejoin="round"></polyline>
<circle cx="1728.2" cy="280.7" r="5" fill="none" stroke="#d42a1e" stroke-width="1.7"></circle>
<path d="M1479.8 321.5H1488.3L1479.8 327.5Z" fill="#333"></path><path d="M1763.5 302H1771V309.5Z" fill="#333"></path>
<line x1="1592.3" y1="386.5" x2="1659.8" y2="388.9" stroke="#2e9fd8" stroke-width="1.7"></line>
<line x1="1592.5" y1="391.4" x2="1659.7" y2="394.3" stroke="#2e9fd8" stroke-width="1.7"></line>
<line x1="1592.8" y1="396.3" x2="1659.6" y2="399.3" stroke="#2e9fd8" stroke-width="1.7"></line>
<line x1="1593.0" y1="401.6" x2="1659.5" y2="404.2" stroke="#2e9fd8" stroke-width="1.7"></line>
<line x1="1593.3" y1="406.6" x2="1659.4" y2="408.6" stroke="#2e9fd8" stroke-width="1.7"></line>
<line x1="1593.5" y1="411.4" x2="1659.3" y2="413.0" stroke="#2e9fd8" stroke-width="1.7"></line>
<line x1="1593.7" y1="416.3" x2="1659.1" y2="417.3" stroke="#2e9fd8" stroke-width="1.7"></line>
<line x1="1594.0" y1="421.4" x2="1659.0" y2="421.4" stroke="#2e9fd8" stroke-width="1.7"></line>
<line x1="1594.2" y1="425.8" x2="1658.9" y2="425.5" stroke="#2e9fd8" stroke-width="1.7"></line>
<line x1="1594.5" y1="430.4" x2="1658.8" y2="429.6" stroke="#2e9fd8" stroke-width="1.7"></line>
<line x1="1594.7" y1="434.8" x2="1658.7" y2="433.2" stroke="#2e9fd8" stroke-width="1.7"></line>
<line x1="1594.9" y1="438.9" x2="1658.6" y2="437.0" stroke="#2e9fd8" stroke-width="1.7"></line>
<line x1="1595.2" y1="443.0" x2="1658.4" y2="440.6" stroke="#2e9fd8" stroke-width="1.7"></line>
<line x1="1595.4" y1="447.1" x2="1658.3" y2="444.7" stroke="#2e9fd8" stroke-width="1.7"></line>
<line x1="1595.7" y1="451.2" x2="1658.2" y2="448.8" stroke="#2e9fd8" stroke-width="1.7"></line>
<line x1="1595.9" y1="455.3" x2="1658.1" y2="452.0" stroke="#2e9fd8" stroke-width="1.7"></line>
<line x1="1596.2" y1="459.4" x2="1658.0" y2="456.1" stroke="#2e9fd8" stroke-width="1.7"></line>
<line x1="1596.4" y1="463.5" x2="1657.9" y2="459.4" stroke="#2e9fd8" stroke-width="1.7"></line>
<line x1="1483.7" y1="421.6" x2="1767.7" y2="421.6" stroke="#ff40ff" stroke-width="1.3"></line>
<polygon points="1483.7,509.5 1483.7,421.2 1501.7,389.8 1546.1,380.6 1645.0,387.0 1723.4,402.8 1768.1,480.6" fill="none" stroke="#1f3044" stroke-width="2" stroke-linejoin="round"></polygon>
<path d="M1497.2 384.6 C1498.2 383.8 1500.6 381.2 1503.0 380.0 C1505.4 378.8 1504.3 377.4 1511.5 377.4 C1518.7 377.4 1527.9 378.8 1546.1 380.0 C1564.2 381.2 1596.7 383.1 1620.4 384.6 C1644.1 386.1 1675.2 387.8 1688.2 389.1 C1701.2 390.4 1694.8 390.5 1698.7 392.4 C1702.6 394.2 1707.4 397.5 1711.7 400.2 C1716.0 402.9 1719.7 405.7 1724.7 408.7 C1729.8 411.7 1739.1 416.4 1742.0 418.0" fill="none" stroke="#1ec81e" stroke-width="2"></path>
<polyline points="1483.7,433.8 1555.4,472.9 1574.0,472.4 1670.0,466.4 1723.3,461.7 1739.3,460.6 1748.9,448.9" fill="none" stroke="#2e9fd8" stroke-width="2" stroke-linejoin="round"></polyline>
<polyline points="1483.7,463.2 1521.2,482.9 1531.7,488.1 1548.8,490.7 1574.0,488.6 1670.0,479.2 1678.5,477.7 1723.3,461.3 1744.6,436.5" fill="none" stroke="#e0483a" stroke-width="1.1" stroke-linejoin="round"></polyline>
<circle cx="1525.7" cy="486.5" r="5.1" fill="none" stroke="#d42a1e" stroke-width="1.7"></circle>
<path d="M1483.2 510H1491.2L1483.2 517Z" fill="#333"></path><path d="M1760.5 481H1768.6V488Z" fill="#333"></path>
<circle cx="1405.2" cy="561" r="5" fill="none" stroke="#d42a1e" stroke-width="1.8"></circle>
</svg>
<div class="t" style="left:1478px;top:324px;font-size:13px;line-height:16px;color:#222">Heel</div>
<div class="t" style="left:1751px;top:306px;font-size:13px;line-height:16px;color:#222">Toe</div>
<div class="t" style="left:1480px;top:513px;font-size:13px;line-height:16px;color:#222">Heel</div>
<div class="t" style="left:1748px;top:485px;font-size:13px;line-height:16px;color:#222">Toe</div>
<div class="t" style="left: 1417px; top: 553px; font-size: 13.6px; line-height: 16px; color: rgb(34, 34, 34); letter-spacing: -0.049px;">Minimum tip clearance</div>
<div class="a" style="left:1344px;top:574px;width:572px;height:34px;background:#f0f0f0"></div>
<div class="t" style="left: 1356px; top: 582px; letter-spacing: -0.138px;">Result data is valid</div>
<!-- END QR CONTENT -->

</body></html>
